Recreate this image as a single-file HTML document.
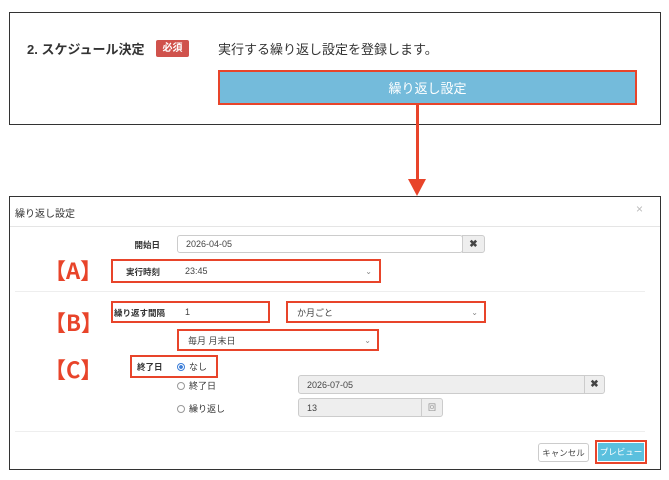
<!DOCTYPE html>
<html><head><meta charset="utf-8"><style>
*{box-sizing:border-box;margin:0;padding:0}
body{width:669px;height:480px;background:#fff;position:relative;font-family:"Liberation Sans","Noto Sans CJK JP",sans-serif;color:#333;overflow:hidden}
.a{position:absolute}
.red{border:2.5px solid #e8442a}
.inp{position:absolute;border:1px solid #ccc;border-radius:3px;background:#fff;font-size:9px;padding-left:8px;display:flex;align-items:center;color:#444}
.gray{background:#eee}
.lbl{position:absolute;font-size:8.5px;font-weight:bold;color:#333}
.big{position:absolute;color:#e8442a;font-weight:bold;font-size:22px;font-family:"Noto Sans CJK JP",sans-serif;line-height:1}
.chev{position:absolute;right:6px;font-size:8px;color:#888}
.rad{display:inline-block;width:8px;height:8px;border:1px solid #999;border-radius:50%;vertical-align:-1px;margin-right:4px}
</style></head><body>
<div class="a" style="left:9px;top:12px;width:652px;height:113px;border:1.5px solid #333"></div>
<div class="a" style="left:27px;top:39px;font-size:13px;font-weight:bold;color:#333">2. スケジュール決定</div>
<div class="a" style="left:156px;top:40px;width:33px;height:17px;background:#d0524c;color:#fff;font-size:10px;font-weight:bold;text-align:center;line-height:17px;border-radius:2px">必須</div>
<div class="a" style="left:218px;top:39px;font-size:13px;color:#333">実行する繰り返し設定を登録します。</div>
<div class="a red" style="left:218px;top:70px;width:419px;height:35px;background:#74bbdb;color:#fff;font-size:13px;text-align:center;line-height:33px">繰り返し設定</div>
<div class="a" style="left:416px;top:105px;width:3px;height:75px;background:#e8442a"></div>
<div class="a" style="left:408px;top:179px;width:0;height:0;border-left:9.5px solid transparent;border-right:9.5px solid transparent;border-top:17px solid #e8442a"></div>

<div class="a" style="left:9px;top:196px;width:652px;height:274px;border:1.5px solid #333"></div>
<div class="a" style="left:15px;top:205px;font-size:10px;color:#333">繰り返し設定</div>
<div class="a" style="left:636px;top:202px;font-size:12px;color:#bbb">×</div>
<div class="a" style="left:10px;top:226px;width:650px;height:1px;background:#e5e5e5"></div>

<div class="lbl" style="left:130px;top:239px;width:30px;text-align:right">開始日</div>
<div class="inp" style="left:177px;top:235px;width:286px;height:18px">2026-04-05</div>
<div class="inp gray" style="left:462px;top:235px;width:23px;height:18px;padding:0;justify-content:center;font-weight:bold;font-size:10px;border-radius:0 3px 3px 0">✖</div>

<div class="big" style="left:44px;top:259px">【A】</div>
<div class="a red" style="left:111px;top:259px;width:270px;height:24px"></div>
<div class="lbl" style="left:126px;top:266px;width:34px;text-align:right">実行時刻</div>
<div class="inp" style="left:177px;top:262px;width:201px;height:18px;border:none">23:45<span class="chev">⌄</span></div>
<div class="a" style="left:15px;top:291px;width:630px;height:1px;background:#eee"></div>

<div class="big" style="left:44px;top:311px">【B】</div>
<div class="a red" style="left:111px;top:301px;width:159px;height:22px"></div>
<div class="lbl" style="left:114px;top:307px">繰り返す間隔</div>
<div class="inp" style="left:177px;top:303px;width:90px;height:18px;border:none">1</div>
<div class="a red" style="left:286px;top:301px;width:200px;height:22px"></div>
<div class="inp" style="left:289px;top:303px;width:195px;height:18px;border:none">か月ごと<span class="chev">⌄</span></div>
<div class="a red" style="left:177px;top:329px;width:202px;height:22px"></div>
<div class="inp" style="left:180px;top:331px;width:197px;height:18px;border:none">毎月 月末日<span class="chev">⌄</span></div>

<div class="big" style="left:44px;top:358px">【C】</div>
<div class="a red" style="left:130px;top:355px;width:88px;height:23px"></div>
<div class="lbl" style="left:137px;top:361px">終了日</div>
<div class="a" style="left:177px;top:360px;font-size:9px"><span class="rad" style="border-color:#3b7dd8;background:radial-gradient(#3b7dd8 40%,#fff 50%)"></span>なし</div>
<div class="a" style="left:177px;top:379px;font-size:9px"><span class="rad"></span>終了日</div>
<div class="inp gray" style="left:298px;top:375px;width:287px;height:19px;border-radius:3px 0 0 3px">2026-07-05</div>
<div class="inp gray" style="left:584px;top:375px;width:21px;height:19px;padding:0;justify-content:center;font-weight:bold;font-size:10px;border-radius:0 3px 3px 0">✖</div>
<div class="a" style="left:177px;top:402px;font-size:9px"><span class="rad"></span>繰り返し</div>
<div class="inp gray" style="left:298px;top:398px;width:124px;height:19px;border-radius:3px 0 0 3px">13</div>
<div class="inp gray" style="left:421px;top:398px;width:22px;height:19px;padding:0;justify-content:center;font-size:8px;color:#888;border-radius:0 3px 3px 0">回</div>
<div class="a" style="left:15px;top:431px;width:630px;height:1px;background:#eee"></div>

<div class="inp" style="left:538px;top:443px;width:51px;height:19px;padding:0;justify-content:center;font-size:8.5px">キャンセル</div>
<div class="a red" style="left:595px;top:440px;width:52px;height:24px;background:#fff"></div>
<div class="a" style="left:598px;top:443px;width:46px;height:18px;background:#5bc0de;color:#fff;font-size:8.5px;text-align:center;line-height:18px">プレビュー</div>
</body></html>
